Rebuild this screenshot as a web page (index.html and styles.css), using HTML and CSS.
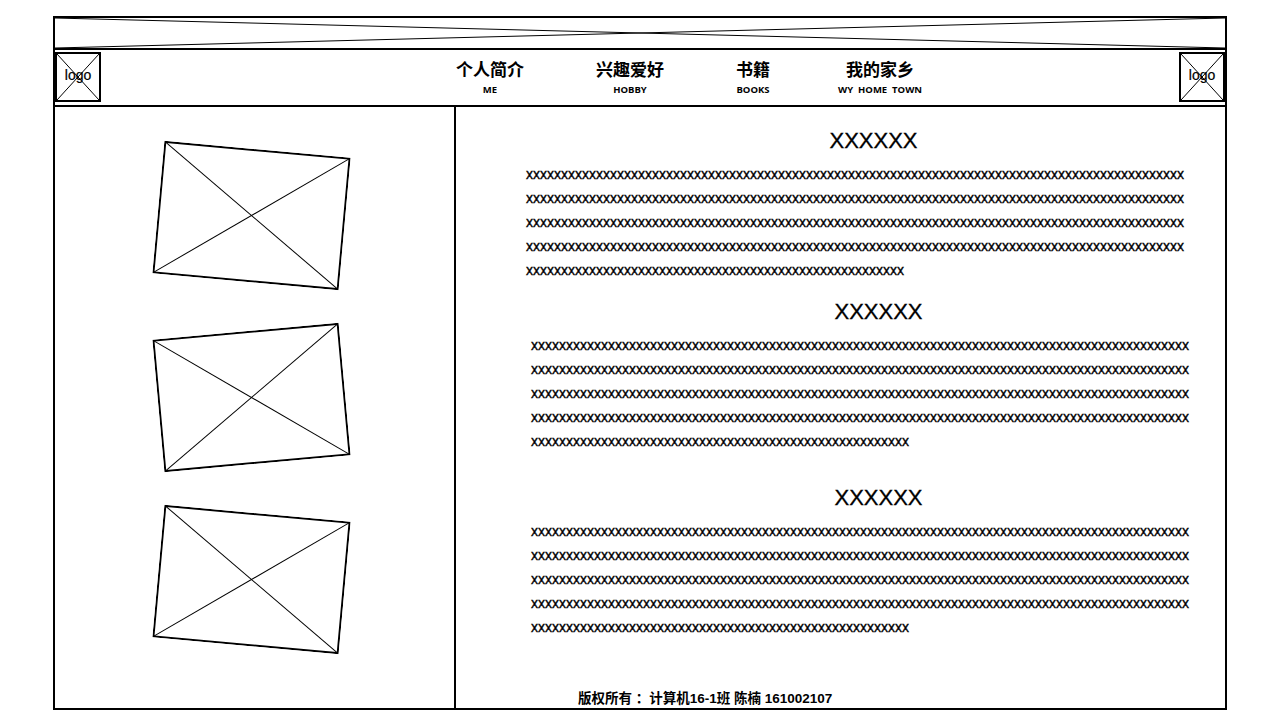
FILE: index.html
```html
<!DOCTYPE html>
<html lang="zh-CN">
<head>
    <meta charset="UTF-8">
    <meta name="viewport" content="width=device-width, initial-scale=1.0">
    <title>个人主页</title>
    <link rel="stylesheet" href="styles.css">
</head>
<body>
    <div class="page">
        <header class="banner">
            <svg class="cross" viewBox="0 0 100 100" preserveAspectRatio="none">
                <line x1="0" y1="0" x2="100" y2="100"/>
                <line x1="0" y1="100" x2="100" y2="0"/>
            </svg>
        </header>

        <nav class="nav">
            <div class="logo">
                <svg class="logo-cross" viewBox="0 0 100 100" preserveAspectRatio="none">
                    <line x1="0" y1="0" x2="100" y2="100"/>
                    <line x1="0" y1="100" x2="100" y2="0"/>
                </svg>
                <span>logo</span>
            </div>

            <ul class="menu">
                <li class="menu-item">
                    <a href="#me" class="menu-title">个人简介</a>
                    <span class="menu-sub">ME</span>
                </li>
                <li class="menu-item">
                    <a href="#hobby" class="menu-title">兴趣爱好</a>
                    <span class="menu-sub">HOBBY</span>
                </li>
                <li class="menu-item">
                    <a href="#books" class="menu-title">书籍</a>
                    <span class="menu-sub">BOOKS</span>
                </li>
                <li class="menu-item menu-item-last">
                    <a href="#home" class="menu-title">我的家乡</a>
                    <span class="menu-sub">WY&nbsp; HOME&nbsp; TOWN</span>
                </li>
            </ul>

            <div class="logo">
                <svg class="logo-cross" viewBox="0 0 100 100" preserveAspectRatio="none">
                    <line x1="0" y1="0" x2="100" y2="100"/>
                    <line x1="0" y1="100" x2="100" y2="0"/>
                </svg>
                <span>logo</span>
            </div>
        </nav>

        <main class="main">
            <aside class="gallery">
                <svg class="photo tilt-right" viewBox="0 0 187 133">
                    <rect x="1" y="1" width="185" height="131"/>
                    <line x1="1" y1="1" x2="186" y2="132"/>
                    <line x1="1" y1="132" x2="186" y2="1"/>
                </svg>
                <svg class="photo tilt-left" viewBox="0 0 187 133">
                    <rect x="1" y="1" width="185" height="131"/>
                    <line x1="1" y1="1" x2="186" y2="132"/>
                    <line x1="1" y1="132" x2="186" y2="1"/>
                </svg>
                <svg class="photo tilt-right" viewBox="0 0 187 133">
                    <rect x="1" y="1" width="185" height="131"/>
                    <line x1="1" y1="1" x2="186" y2="132"/>
                    <line x1="1" y1="132" x2="186" y2="1"/>
                </svg>
            </aside>

            <section class="content">
                <article id="me" class="article">
                    <h2>XXXXXX</h2>
                    <p>
                        <span class="line">xxxxxxxxxx<wbr>xxxxxxxxxx<wbr>xxxxxxxxxx<wbr>xxxxxxxxxx<wbr>xxxxxxxxxx<wbr>xxxxxxxxxx<wbr>xxxxxxxxxx<wbr>xxxxxxxxxx<wbr>xxxxxxxxxx<wbr>xxxx</span>
                        <span class="line">xxxxxxxxxx<wbr>xxxxxxxxxx<wbr>xxxxxxxxxx<wbr>xxxxxxxxxx<wbr>xxxxxxxxxx<wbr>xxxxxxxxxx<wbr>xxxxxxxxxx<wbr>xxxxxxxxxx<wbr>xxxxxxxxxx<wbr>xxxx</span>
                        <span class="line">xxxxxxxxxx<wbr>xxxxxxxxxx<wbr>xxxxxxxxxx<wbr>xxxxxxxxxx<wbr>xxxxxxxxxx<wbr>xxxxxxxxxx<wbr>xxxxxxxxxx<wbr>xxxxxxxxxx<wbr>xxxxxxxxxx<wbr>xxxx</span>
                        <span class="line">xxxxxxxxxx<wbr>xxxxxxxxxx<wbr>xxxxxxxxxx<wbr>xxxxxxxxxx<wbr>xxxxxxxxxx<wbr>xxxxxxxxxx<wbr>xxxxxxxxxx<wbr>xxxxxxxxxx<wbr>xxxxxxxxxx<wbr>xxxx</span>
                        <span class="line">xxxxxxxxxx<wbr>xxxxxxxxxx<wbr>xxxxxxxxxx<wbr>xxxxxxxxxx<wbr>xxxxxxxxxx<wbr>xxxx</span>
                    </p>
                </article>

                <article id="hobby" class="article article-indent">
                    <h2>XXXXXX</h2>
                    <p>
                        <span class="line">xxxxxxxxxx<wbr>xxxxxxxxxx<wbr>xxxxxxxxxx<wbr>xxxxxxxxxx<wbr>xxxxxxxxxx<wbr>xxxxxxxxxx<wbr>xxxxxxxxxx<wbr>xxxxxxxxxx<wbr>xxxxxxxxxx<wbr>xxxx</span>
                        <span class="line">xxxxxxxxxx<wbr>xxxxxxxxxx<wbr>xxxxxxxxxx<wbr>xxxxxxxxxx<wbr>xxxxxxxxxx<wbr>xxxxxxxxxx<wbr>xxxxxxxxxx<wbr>xxxxxxxxxx<wbr>xxxxxxxxxx<wbr>xxxx</span>
                        <span class="line">xxxxxxxxxx<wbr>xxxxxxxxxx<wbr>xxxxxxxxxx<wbr>xxxxxxxxxx<wbr>xxxxxxxxxx<wbr>xxxxxxxxxx<wbr>xxxxxxxxxx<wbr>xxxxxxxxxx<wbr>xxxxxxxxxx<wbr>xxxx</span>
                        <span class="line">xxxxxxxxxx<wbr>xxxxxxxxxx<wbr>xxxxxxxxxx<wbr>xxxxxxxxxx<wbr>xxxxxxxxxx<wbr>xxxxxxxxxx<wbr>xxxxxxxxxx<wbr>xxxxxxxxxx<wbr>xxxxxxxxxx<wbr>xxxx</span>
                        <span class="line">xxxxxxxxxx<wbr>xxxxxxxxxx<wbr>xxxxxxxxxx<wbr>xxxxxxxxxx<wbr>xxxxxxxxxx<wbr>xxxx</span>
                    </p>
                </article>

                <article id="books" class="article article-indent">
                    <h2>XXXXXX</h2>
                    <p>
                        <span class="line">xxxxxxxxxx<wbr>xxxxxxxxxx<wbr>xxxxxxxxxx<wbr>xxxxxxxxxx<wbr>xxxxxxxxxx<wbr>xxxxxxxxxx<wbr>xxxxxxxxxx<wbr>xxxxxxxxxx<wbr>xxxxxxxxxx<wbr>xxxx</span>
                        <span class="line">xxxxxxxxxx<wbr>xxxxxxxxxx<wbr>xxxxxxxxxx<wbr>xxxxxxxxxx<wbr>xxxxxxxxxx<wbr>xxxxxxxxxx<wbr>xxxxxxxxxx<wbr>xxxxxxxxxx<wbr>xxxxxxxxxx<wbr>xxxx</span>
                        <span class="line">xxxxxxxxxx<wbr>xxxxxxxxxx<wbr>xxxxxxxxxx<wbr>xxxxxxxxxx<wbr>xxxxxxxxxx<wbr>xxxxxxxxxx<wbr>xxxxxxxxxx<wbr>xxxxxxxxxx<wbr>xxxxxxxxxx<wbr>xxxx</span>
                        <span class="line">xxxxxxxxxx<wbr>xxxxxxxxxx<wbr>xxxxxxxxxx<wbr>xxxxxxxxxx<wbr>xxxxxxxxxx<wbr>xxxxxxxxxx<wbr>xxxxxxxxxx<wbr>xxxxxxxxxx<wbr>xxxxxxxxxx<wbr>xxxx</span>
                        <span class="line">xxxxxxxxxx<wbr>xxxxxxxxxx<wbr>xxxxxxxxxx<wbr>xxxxxxxxxx<wbr>xxxxxxxxxx<wbr>xxxx</span>
                    </p>
                </article>

                <footer class="footer">版权所有 ：计算机16-1班 陈楠 161002107</footer>
            </section>
        </main>
    </div>
</body>
</html>
```

FILE: styles.css
```css
body {
    margin: 0;
    font-family: "Liberation Sans", Arial, "Noto Sans CJK SC", sans-serif;
    color: #000;
    background-color: #fff;
}

.page {
    width: 1170px;
    height: 690px;
    margin: 16px 0 0 53px;
    border: 2px solid #000;
    display: flex;
    flex-direction: column;
}

/* top banner placeholder */
.banner {
    height: 30px;
    border-bottom: 2px solid #000;
}

.cross {
    display: block;
    width: 100%;
    height: 100%;
}

.cross line,
.logo-cross line {
    stroke: #000;
    stroke-width: 1;
    vector-effect: non-scaling-stroke;
}

/* navigation */
.nav {
    height: 55px;
    border-bottom: 2px solid #000;
    display: flex;
    align-items: flex-start;
}

.logo {
    position: relative;
    width: 42px;
    height: 46px;
    margin-top: 2px;
    border: 2px solid #000;
    display: flex;
    align-items: center;
    justify-content: center;
    font-size: 14px;
}

.logo span {
    position: relative;
    margin-top: -4px;
    -webkit-text-stroke: 0.2px #000;
}

.logo-cross {
    position: absolute;
    top: 0;
    left: 0;
    width: 100%;
    height: 100%;
}

.menu {
    list-style: none;
    margin: 0 auto 0 355px;
    padding: 0;
    display: flex;
    gap: 72px;
}

.menu-item {
    display: flex;
    flex-direction: column;
    align-items: center;
    padding-top: 8px;
}

.menu-item-last {
    margin-left: -4px;
}

.menu-title {
    font-family: "Noto Sans CJK SC", sans-serif;
    font-size: 17px;
    font-weight: bold;
    line-height: 22px;
    color: #000;
    text-decoration: none;
}

.menu-sub {
    margin-top: 4px;
    font-family: "Open Sans", sans-serif;
    font-size: 9.5px;
    font-weight: bold;
    line-height: 12px;
    white-space: nowrap;
}

/* main area */
.main {
    flex: 1;
    display: flex;
}

.gallery {
    width: 393px;
    padding: 42px 6px 0 0;
    border-right: 2px solid #000;
    display: flex;
    flex-direction: column;
    align-items: center;
    gap: 49px;
}

.photo {
    width: 187px;
    height: 133px;
}

.photo rect {
    fill: none;
    stroke: #000;
    stroke-width: 2;
}

.photo line {
    stroke: #000;
    stroke-width: 1;
}

.tilt-right {
    transform: rotate(5.2deg);
}

.tilt-left {
    transform: rotate(-5.2deg);
}

.content {
    flex: 1;
    padding: 16px 0 0 70px;
    display: flex;
    flex-direction: column;
}

.article {
    margin-bottom: 12px;
}

.article-indent {
    margin-left: 5px;
}

.article-indent + .article-indent {
    margin-top: 15px;
}

.article h2 {
    margin: 0 0 3px;
    padding-left: 35px;
    width: 625px;
    font-size: 22px;
    font-weight: normal;
    line-height: 36px;
    text-align: center;
    -webkit-text-stroke: 0.3px #000;
}

.article p {
    margin: 0;
    font-size: 14px;
    line-height: 24px;
    -webkit-text-stroke: 0.35px #000;
}

.line {
    display: block;
    white-space: nowrap;
}

.footer {
    margin-top: auto;
    padding-left: 52px;
    font-family: "Liberation Sans", "Noto Sans CJK SC", sans-serif;
    font-size: 13.5px;
    font-weight: bold;
    line-height: 18px;
}
```
